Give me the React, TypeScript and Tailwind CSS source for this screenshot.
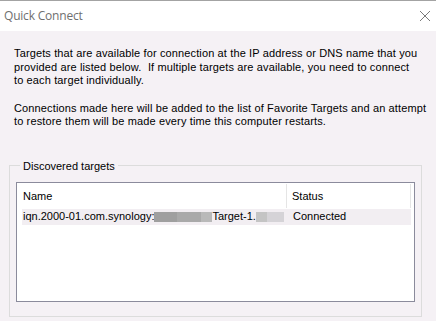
import React from 'react'

const body = { fontFamily: '"Liberation Sans", Arial, sans-serif' }

const Blur: React.FC<{ w: string; c: string }> = ({ w, c }) => (
  <span className={`inline-block h-[10px] align-middle ${w} ${c}`} />
)

export default function App() {
  return (
    <div className="w-[436px] h-[321px] bg-[#f5f1f5] border-t border-[#a3a3a3] flex flex-col overflow-hidden" style={body}>
      {/* title bar */}
      <div className="h-[30px] bg-white flex items-center justify-between pl-[4px] pr-[4px] shrink-0">
        <span className="text-[12px] text-[#6f6f6f] tracking-[-0.2px]" style={{ fontFamily: '"Open Sans", "Noto Sans", sans-serif' }}>
          Quick Connect
        </span>
        <svg width="12" height="12" viewBox="0 0 12 12" className="mr-[1px]">
          <path d="M1 1 L11 11 M11 1 L1 11" stroke="#7a7a7a" strokeWidth="1" fill="none" />
        </svg>
      </div>

      <div className="pl-[14px] pr-[4px] pt-[16px] text-[11px] leading-[13.5px] tracking-[0.13px] text-black whitespace-nowrap">
        <p>
          Targets that are available for connection at the IP address or DNS name that you<br />
          provided are listed below.&nbsp; If multiple targets are available, you need to connect<br />
          to each target individually.
        </p>
        <p className="mt-[14px]">
          Connections made here will be added to the list of Favorite Targets and an attempt<br />
          to restore them will be made every time this computer restarts.
        </p>
      </div>

      <fieldset className="ml-[9px] w-[413px] mt-[30px] h-[158px] border border-[#dcdcdc] px-[6px] pb-[13px] text-[11px] text-black">
        <legend className="ml-[4px] px-[3px] leading-[14px]">Discovered targets</legend>
        <div className="mt-[9px] h-[120px] border border-[#8b8b9c] bg-white flex flex-col">
          <div className="h-[26px] flex items-stretch shrink-0 pt-[1px] pb-[1px]">
            <div className="w-[270px] pl-[6px] pt-[4px] border-r border-[#e5e5e5]">Name</div>
            <div className="w-[124px] pl-[5px] pt-[4px] border-r border-[#e5e5e5]">Status</div>
          </div>
          <div className="ml-[5px] w-[389px] h-[16px] bg-[#f2eef2] flex items-center whitespace-nowrap">
            <div className="w-[265px] pl-[1px] flex items-center">
              <span>iqn.2000-01.com.synology:</span>
              <Blur w="w-[23px]" c="bg-[#9f9f9f]" />
              <Blur w="w-[24px]" c="bg-[#a9a9a9]" />
              <Blur w="w-[11px]" c="bg-[#b9b9b9]" />
              <span>Target-1.</span>
              <Blur w="w-[11px]" c="bg-[#c4c4c4]" />
              <Blur w="w-[17px]" c="bg-[#d5d3d7]" />
            </div>
            <div className="pl-[6px]">Connected</div>
          </div>
        </div>
      </fieldset>
    </div>
  )
}
